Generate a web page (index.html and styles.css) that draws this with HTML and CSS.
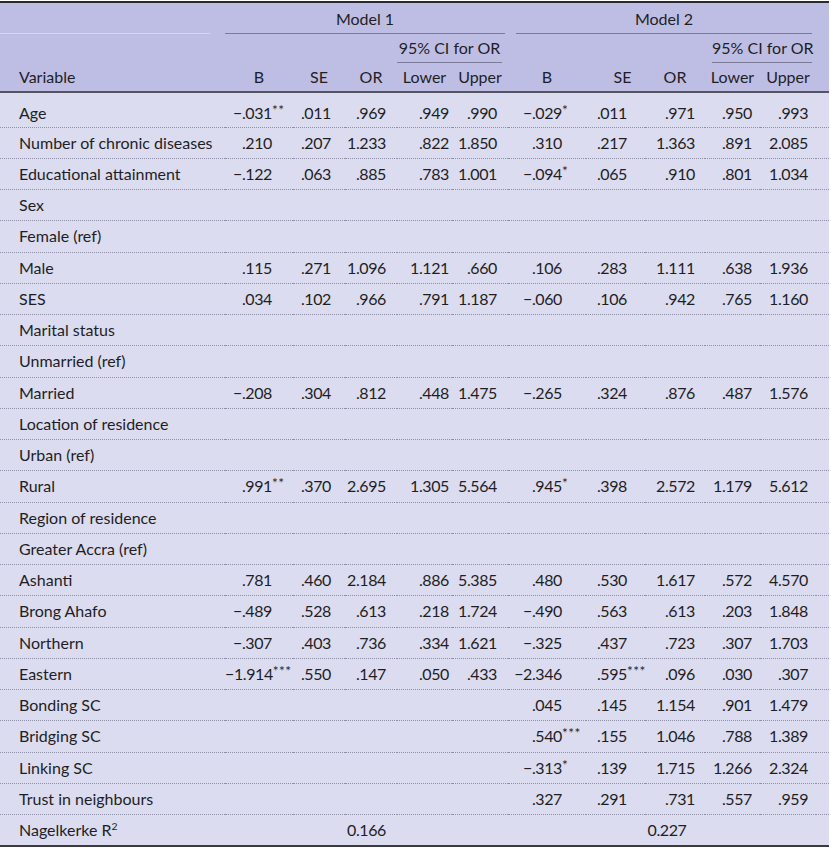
FILE: index.html
```html
<!DOCTYPE html>
<html lang="en">
<head>
    <meta charset="UTF-8">
    <meta name="viewport" content="width=device-width, initial-scale=1.0">
    <title>Logistic regression: Model 1 and Model 2</title>
    <link rel="stylesheet" href="styles.css">
</head>
<body>
    <table class="results">
        <colgroup>
            <col class="c-var">
            <col class="c-b1"><col class="c-se1"><col class="c-or1"><col class="c-lo1"><col class="c-up1">
            <col class="c-b2"><col class="c-se2"><col class="c-or2"><col class="c-lo2"><col class="c-up2">
            <col class="c-end">
        </colgroup>
        <thead>
            <tr class="h1">
                <th class="var"><span class="faint"></span></th>
                <th colspan="5" class="group m1"><span>Model 1</span></th>
                <th colspan="5" class="group m2"><span>Model 2</span></th>
                <th></th>
            </tr>
            <tr class="h2">
                <th></th>
                <th colspan="3"></th>
                <th colspan="2" class="group ci1"><span>95% CI for OR</span></th>
                <th colspan="3"></th>
                <th colspan="2" class="group ci2"><span>95% CI for OR</span></th>
                <th></th>
            </tr>
            <tr class="h3">
                <th class="var">Variable</th>
                <th>B</th><th>SE</th><th>OR</th><th>Lower</th><th>Upper</th>
                <th>B</th><th class="se2">SE</th><th>OR</th><th>Lower</th><th>Upper</th>
                <th></th>
            </tr>
        </thead>
        <tbody>
            <tr class="first"><td class="var">Age</td><td>&minus;.031<span class="sig">**</span></td><td>.011</td><td>.969</td><td>.949</td><td>.990</td><td>&minus;.029<span class="sig">*</span></td><td>.011</td><td>.971</td><td>.950</td><td>.993</td><td></td></tr>
            <tr><td class="var">Number of chronic diseases</td><td>.210</td><td>.207</td><td>1.233</td><td>.822</td><td>1.850</td><td>.310</td><td>.217</td><td>1.363</td><td>.891</td><td>2.085</td><td></td></tr>
            <tr><td class="var">Educational attainment</td><td>&minus;.122</td><td>.063</td><td>.885</td><td>.783</td><td>1.001</td><td>&minus;.094<span class="sig">*</span></td><td>.065</td><td>.910</td><td>.801</td><td>1.034</td><td></td></tr>
            <tr><td class="var">Sex</td><td></td><td></td><td></td><td></td><td></td><td></td><td></td><td></td><td></td><td></td><td></td></tr>
            <tr><td class="var">Female (ref)</td><td></td><td></td><td></td><td></td><td></td><td></td><td></td><td></td><td></td><td></td><td></td></tr>
            <tr><td class="var">Male</td><td>.115</td><td>.271</td><td>1.096</td><td>1.121</td><td>.660</td><td>.106</td><td>.283</td><td>1.111</td><td>.638</td><td>1.936</td><td></td></tr>
            <tr><td class="var">SES</td><td>.034</td><td>.102</td><td>.966</td><td>.791</td><td>1.187</td><td>&minus;.060</td><td>.106</td><td>.942</td><td>.765</td><td>1.160</td><td></td></tr>
            <tr><td class="var">Marital status</td><td></td><td></td><td></td><td></td><td></td><td></td><td></td><td></td><td></td><td></td><td></td></tr>
            <tr><td class="var">Unmarried (ref)</td><td></td><td></td><td></td><td></td><td></td><td></td><td></td><td></td><td></td><td></td><td></td></tr>
            <tr><td class="var">Married</td><td>&minus;.208</td><td>.304</td><td>.812</td><td>.448</td><td>1.475</td><td>&minus;.265</td><td>.324</td><td>.876</td><td>.487</td><td>1.576</td><td></td></tr>
            <tr><td class="var">Location of residence</td><td></td><td></td><td></td><td></td><td></td><td></td><td></td><td></td><td></td><td></td><td></td></tr>
            <tr><td class="var">Urban (ref)</td><td></td><td></td><td></td><td></td><td></td><td></td><td></td><td></td><td></td><td></td><td></td></tr>
            <tr><td class="var">Rural</td><td>.991<span class="sig">**</span></td><td>.370</td><td>2.695</td><td>1.305</td><td>5.564</td><td>.945<span class="sig">*</span></td><td>.398</td><td>2.572</td><td>1.179</td><td>5.612</td><td></td></tr>
            <tr><td class="var">Region of residence</td><td></td><td></td><td></td><td></td><td></td><td></td><td></td><td></td><td></td><td></td><td></td></tr>
            <tr><td class="var">Greater Accra (ref)</td><td></td><td></td><td></td><td></td><td></td><td></td><td></td><td></td><td></td><td></td><td></td></tr>
            <tr><td class="var">Ashanti</td><td>.781</td><td>.460</td><td>2.184</td><td>.886</td><td>5.385</td><td>.480</td><td>.530</td><td>1.617</td><td>.572</td><td>4.570</td><td></td></tr>
            <tr><td class="var">Brong Ahafo</td><td>&minus;.489</td><td>.528</td><td>.613</td><td>.218</td><td>1.724</td><td>&minus;.490</td><td>.563</td><td>.613</td><td>.203</td><td>1.848</td><td></td></tr>
            <tr><td class="var">Northern</td><td>&minus;.307</td><td>.403</td><td>.736</td><td>.334</td><td>1.621</td><td>&minus;.325</td><td>.437</td><td>.723</td><td>.307</td><td>1.703</td><td></td></tr>
            <tr><td class="var">Eastern</td><td>&minus;1.914<span class="sig">***</span></td><td>.550</td><td>.147</td><td>.050</td><td>.433</td><td>&minus;2.346</td><td>.595<span class="sig">***</span></td><td>.096</td><td>.030</td><td>.307</td><td></td></tr>
            <tr><td class="var">Bonding SC</td><td></td><td></td><td></td><td></td><td></td><td>.045</td><td>.145</td><td>1.154</td><td>.901</td><td>1.479</td><td></td></tr>
            <tr><td class="var">Bridging SC</td><td></td><td></td><td></td><td></td><td></td><td>.540<span class="sig">***</span></td><td>.155</td><td>1.046</td><td>.788</td><td>1.389</td><td></td></tr>
            <tr><td class="var">Linking SC</td><td></td><td></td><td></td><td></td><td></td><td>&minus;.313<span class="sig">*</span></td><td>.139</td><td>1.715</td><td>1.266</td><td>2.324</td><td></td></tr>
            <tr><td class="var">Trust in neighbours</td><td></td><td></td><td></td><td></td><td></td><td>.327</td><td>.291</td><td>.731</td><td>.557</td><td>.959</td><td></td></tr>
            <tr class="last"><td class="var">Nagelkerke R<sup>2</sup></td><td colspan="5" class="fit">0.166</td><td colspan="5" class="fit">0.227</td><td></td></tr>
        </tbody>
    </table>
</body>
</html>
```

FILE: styles.css
```css
body {
    margin: 0;
    padding: 1px 0 0 0;
    background-color: #ffffff;
    font-family: Lato, "Open Sans", Arial, sans-serif;
    font-size: 16px;
    color: #1e1e24;
}

.results {
    width: 829px;
    table-layout: fixed;
    border-collapse: collapse;
    border-top: 2px solid #2a2a30;
    border-bottom: 2px solid #3a3a40;
}

/* column widths */
.c-var { width: 225px; }
.c-b1  { width: 68px; }
.c-se1 { width: 52px; }
.c-or1 { width: 52px; }
.c-lo1 { width: 55px; }
.c-up1 { width: 56px; }
.c-b2  { width: 78px; }
.c-se2 { width: 59px; }
.c-or2 { width: 60px; }
.c-lo2 { width: 55px; }
.c-up2 { width: 56px; }
.c-end { width: 13px; }

/* header */
thead {
    background-color: #bebee5;
}
thead tr.h1 { height: 32px; }
thead tr.h2 { height: 29px; }
thead tr.h3 {
    height: 29px;
    border-bottom: 2px solid #55555f;
}
th {
    font-weight: normal;
    text-align: center;
    padding: 0;
    white-space: nowrap;
}
th.var {
    text-align: left;
    padding-left: 19px;
}
th.se2 {
    padding-left: 14px;
}
.h1 th, .h2 th {
    vertical-align: bottom;
}
.h3 th {
    vertical-align: bottom;
    padding-bottom: 5px;
}
.group span {
    display: block;
    padding-bottom: 5px;
    border-bottom: 1px solid #7c7c98;
}
.group.m1 span { margin: 0 3px 0 0; }
.group.m2 span { margin: 0 4px 0 8px; }
.group.ci1 span { margin: 0 6px 0 0; }
.group.ci2 span { margin: 0 4px 0 7px; }

.h1 th.var {
    padding: 0;
}
.faint {
    display: block;
    margin-right: 15px;
    border-bottom: 1px solid rgba(255, 255, 255, 0.35);
}

/* body */
tbody {
    background-color: #dcdcf0;
}
tbody tr {
    height: 31.25px;
    border-bottom: 1px dotted #8e8ea6;
}
tbody tr.first {
    height: 35px;
}
tbody tr.first td {
    padding-top: 6px;
}
tbody tr.last {
    border-bottom: none;
}
td {
    padding: 0 0 1px 0;
    text-align: right;
    white-space: nowrap;
    vertical-align: middle;
    letter-spacing: -0.4px;
}
td.var {
    text-align: left;
    padding-left: 19px;
    letter-spacing: 0;
}
td:nth-child(2)  { padding-right: 21px; }
td:nth-child(3)  { padding-right: 14px; }
td:nth-child(4)  { padding-right: 11px; }
td:nth-child(5)  { padding-right: 3px; }
td:nth-child(6)  { padding-right: 11px; }
td:nth-child(7)  { padding-right: 24px; }
td:nth-child(8)  { padding-right: 18px; }
td:nth-child(9)  { padding-right: 10px; }
td:nth-child(10) { padding-right: 8px; }
td:nth-child(11) { padding-right: 8px; }

td.fit {
    text-align: center;
    padding-right: 0;
}
tr.last td.fit + td.fit {
    padding-left: 10px;
}

/* significance stars hang past the digits */
.sig {
    display: inline-block;
    width: 0;
    font-size: 0.85em;
    line-height: 0;
    vertical-align: 0.3em;
    text-align: left;
    letter-spacing: 0.5px;
}

sup {
    font-size: 0.65em;
    vertical-align: 0.55em;
    line-height: 0;
}
```
